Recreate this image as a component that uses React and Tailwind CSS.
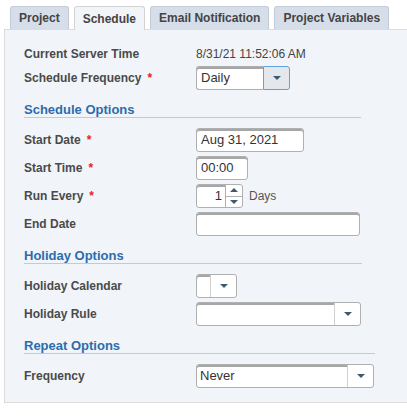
const Caret = () => (
  <svg width="8" height="4" viewBox="0 0 8 4">
    <path d="M0 0h8L4 4z" fill="#3d5b6e" />
  </svg>
);

const Up = () => (
  <svg width="8" height="4" viewBox="0 0 8 4">
    <path d="M0 4h8L4 0z" fill="#3d5b6e" />
  </svg>
);

const inputCls =
  'h-[24px] bg-white border border-[#b0b0b0] rounded-[3px] shadow-[inset_0_2px_0_#a6a6a6] px-[4px] text-[13px] text-[#333] flex items-center';

function Label({ text, req }) {
  return (
    <div className="w-[172px] shrink-0 text-[12px] font-bold text-[#4a4a4a]">
      {text}
      {req && <span className="text-[#e8231f] ml-[6px]">*</span>}
    </div>
  );
}

function Row({ label, req, children }) {
  return (
    <div className="flex items-center h-[24px]">
      <Label text={label} req={req} />
      {children}
    </div>
  );
}

function Header({ text, w }) {
  return (
    <div className={`${w} border-b border-[#c9c9c9] text-[13px] leading-[14px] font-bold text-[#2c6cad]`}>
      {text}
    </div>
  );
}

function Select({ w, value, left }) {
  return (
    <div className={`${w} h-[24px] flex bg-white border border-[#b0b0b0] rounded-[3px]`}>
      <div className={`${left ?? 'flex-1'} shadow-[inset_0_2px_0_#a6a6a6] rounded-l-[2px] px-[3px] text-[13px] text-[#333] flex items-center`}>
        {value}
      </div>
      <div className="w-[26px] border-l border-[#d0d0d0] flex items-center justify-center">
        <Caret />
      </div>
    </div>
  );
}

export default function App() {
  return (
    <div className="w-[407px] h-[416px] bg-white font-['Liberation_Sans',Arial,sans-serif] pt-[6px] overflow-hidden">
      <div className="flex gap-[5px] pl-[10px] h-[23px] items-end relative z-10">
        <div className="h-[23px] px-[8px] flex items-center rounded-t-[3px] border border-b-0 border-[#c3cbd6] bg-[#d5dee9] text-[12px] font-bold text-[#444]">Project</div>
        <div className="h-[24px] -mb-[1px] px-[8px] flex items-center rounded-t-[3px] border border-b-0 border-[#d3d3d3] bg-[#f1f4f9] text-[12px] font-bold text-[#444]">Schedule</div>
        <div className="h-[23px] px-[8px] flex items-center rounded-t-[3px] border border-b-0 border-[#c3cbd6] bg-[#d5dee9] text-[12px] font-bold text-[#444]">Email Notification</div>
        <div className="h-[23px] px-[8px] flex items-center rounded-t-[3px] border border-b-0 border-[#c3cbd6] bg-[#d5dee9] text-[12px] font-bold text-[#444]">Project Variables</div>
      </div>
      <div className="ml-[4px] w-[420px] bg-[#f1f4f9] border border-[#dcdcdc] pl-[19px] pt-[12px] pb-[14px]">
        <Row label="Current Server Time">
          <span className="text-[12px] text-[#444]">8/31/21 11:52:06 AM</span>
        </Row>
        <Row label="Schedule Frequency" req>
          <div className="w-[94px] h-[24px] flex">
            <div className="flex-1 bg-white border border-[#b0b0b0] border-r-0 rounded-l-[3px] shadow-[inset_0_2px_0_#a6a6a6] px-[4px] text-[13px] text-[#333] flex items-center">Daily</div>
            <div className="w-[27px] bg-[#e4e7eb] border border-[#5fa3dc] rounded-r-[3px] flex items-center justify-center">
              <Caret />
            </div>
          </div>
        </Row>

        <div className="mt-[13px]">
          <Header text="Schedule Options" w="w-[337px]" />
        </div>
        <div className="mt-[10px] flex flex-col gap-[4px]">
          <Row label="Start Date" req>
            <div className={`${inputCls} w-[108px]`}>Aug 31, 2021</div>
          </Row>
          <Row label="Start Time" req>
            <div className={`${inputCls} w-[52px]`}>00:00</div>
          </Row>
          <Row label="Run Every" req>
            <div className="w-[47px] h-[24px] flex bg-white border border-[#b0b0b0] rounded-[3px]">
              <div className="flex-1 shadow-[inset_0_2px_0_#a6a6a6] rounded-l-[2px] pr-[3px] text-[13px] text-[#333] flex items-center justify-end">1</div>
              <div className="w-[17px] border-l border-[#b0b0b0] flex flex-col">
                <div className="flex-1 flex items-center justify-center border-b border-[#b0b0b0]"><Up /></div>
                <div className="flex-1 flex items-center justify-center"><Caret /></div>
              </div>
            </div>
            <span className="ml-[6px] text-[12px] text-[#555]">Days</span>
          </Row>
          <Row label="End Date">
            <div className={`${inputCls} w-[164px]`}></div>
          </Row>
        </div>

        <div className="mt-[13px]">
          <Header text="Holiday Options" w="w-[338px]" />
        </div>
        <div className="mt-[10px] flex flex-col gap-[4px]">
          <Row label="Holiday Calendar">
            <Select w="w-[41px]" left="w-[13px]" value="" />
          </Row>
          <Row label="Holiday Rule">
            <Select w="w-[165px]" value="" />
          </Row>
        </div>

        <div className="mt-[13px]">
          <Header text="Repeat Options" w="w-[351px]" />
        </div>
        <div className="mt-[10px]">
          <Row label="Frequency">
            <Select w="w-[178px]" value="Never" />
          </Row>
        </div>
      </div>
    </div>
  );
}
